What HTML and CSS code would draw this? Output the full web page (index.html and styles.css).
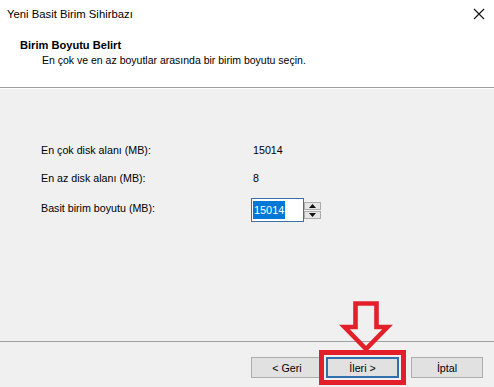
FILE: index.html
```html
<!DOCTYPE html>
<html lang="tr">
<head>
<meta charset="utf-8">
<title>Yeni Basit Birim Sihirbazı</title>
<link rel="stylesheet" href="styles.css">
</head>
<body>
<div class="window">
  <div class="top">
    <div class="titlebar">
      <span class="title">Yeni Basit Birim Sihirbazı</span>
      <svg class="close" width="12" height="12" viewBox="0 0 12 12"><path d="M1 1 L11 11 M11 1 L1 11" stroke="#111" stroke-width="1.1" fill="none"/></svg>
    </div>
    <div class="heading">Birim Boyutu Belirt</div>
    <div class="subtitle">En çok ve en az boyutlar arasında bir birim boyutu seçin.</div>
  </div>
  <div class="main">
    <div class="row"><span class="label">En çok disk alanı (MB):</span><span class="value">15014</span></div>
    <div class="row"><span class="label">En az disk alanı (MB):</span><span class="value">8</span></div>
    <div class="row row-input">
      <span class="label">Basit birim boyutu (MB):</span>
      <div class="spinner">
        <div class="textbox"><span class="sel">15014</span></div>
        <div class="spin">
          <div class="spin-btn"><svg width="7" height="4" viewBox="0 0 7 4"><path d="M0 4 L3.5 0 L7 4Z" fill="#111"/></svg></div>
          <div class="spin-btn"><svg width="7" height="4" viewBox="0 0 7 4"><path d="M0 0 L3.5 4 L7 0Z" fill="#111"/></svg></div>
        </div>
      </div>
    </div>
  </div>
  <div class="footer">
    <button class="btn">&lt; Geri</button>
    <button class="btn btn-default">İleri &gt;</button>
    <button class="btn btn-cancel">İptal</button>
  </div>
  <svg class="arrow" width="60" height="62" viewBox="0 0 60 62">
    <path d="M19.5 8.5 L40.5 8.5 L40.5 32 L51.5 32 L30 54 L8.5 32 L19.5 32 Z" fill="none" stroke="#e3202a" stroke-width="4.6" stroke-linejoin="miter"/>
  </svg>
</div>
</body>
</html>
```

FILE: styles.css
```css
* { box-sizing: border-box; }
html, body { margin: 0; padding: 0; }
body {
  width: 494px;
  height: 387px;
  overflow: hidden;
  background: #f0f0f0;
  font-family: "Liberation Sans", Arial, sans-serif;
  font-size: 10.7px;
  color: #000;
}
.window {
  position: relative;
  width: 494px;
  height: 387px;
  display: flex;
  flex-direction: column;
}
.top {
  background: #fff;
  height: 88px;
  border-bottom: 1px solid #a0a0a0;
  flex: none;
}
.titlebar {
  height: 28px;
  display: flex;
  align-items: center;
  justify-content: space-between;
  padding: 0 9px 0 7px;
}
.title { font-size: 11.3px; color: #000; }
.close { display: block; }
.heading {
  margin-top: 10px;
  padding-left: 20px;
  font-weight: bold;
  font-size: 11.1px;
  line-height: 15px;
}
.subtitle {
  padding-left: 42px;
  font-size: 10.5px;
  line-height: 15px;
}
.main {
  flex: 1;
  border-top: 1px solid #fdfdfd;
  padding: 47px 0 0 41px;
}
.row {
  display: flex;
  align-items: center;
  height: 28px;
}
.row-input { margin-top: 2px; }
.label { width: 210px; flex: none; }
.value { padding-left: 2px; }
.spinner {
  display: flex;
  align-items: center;
  margin-top: 4px;
}
.textbox {
  width: 53px;
  height: 24px;
  border: 1px solid #3d6fa8;
  background: #fff;
  padding: 2px 1px;
  display: flex;
  align-items: stretch;
}
.sel {
  background: #0078d7;
  color: #fff;
  padding: 0 1px;
  display: flex;
  align-items: center;
  font-size: 10.9px;
}
.spin {
  width: 17px;
  height: 17px;
  display: flex;
  flex-direction: column;
  gap: 1px;
}
.spin-btn {
  flex: 1;
  background: #e5e5e5;
  border: 1px solid #acacac;
  display: flex;
  align-items: center;
  justify-content: center;
}
.spin-btn svg { display: block; }
.footer {
  flex: none;
  height: 46px;
  border-top: 1px solid #a0a0a0;
  display: flex;
  justify-content: flex-end;
  align-items: flex-start;
  padding: 15px 11px 0 0;
}
.btn {
  width: 72px;
  height: 21px;
  background: #e1e1e1;
  border: 1px solid #adadad;
  font-family: "Liberation Sans", Arial, sans-serif;
  font-size: 10.7px;
  color: #000;
  padding: 0;
  margin: 0;
}
.btn-default {
  width: 73px;
  margin-left: 3px;
  border: 2px solid #2f6fab;
  outline: 5px solid #e3202a;
  outline-offset: 2px;
}
.btn-cancel { margin-left: 12px; }
.arrow {
  position: absolute;
  left: 336px;
  top: 295px;
  display: block;
}
```
